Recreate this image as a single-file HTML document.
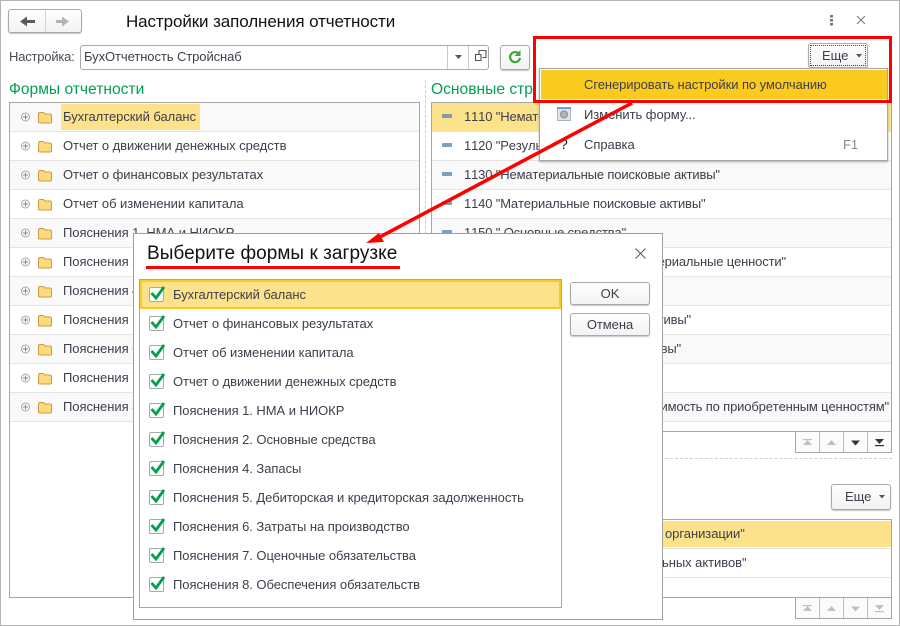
<!DOCTYPE html>
<html lang="ru">
<head>
<meta charset="utf-8">
<title>Настройки заполнения отчетности</title>
<style>
html,body{margin:0;padding:0;background:#fff}
#p{position:relative;width:900px;height:626px;overflow:hidden;background:#fff;font-family:"Liberation Sans",Arial,sans-serif;font-size:13px;color:#3e3e4c}
#p div{position:absolute;box-sizing:border-box}
.t{white-space:nowrap;line-height:16px;letter-spacing:-.05px}
.n{letter-spacing:-.15px;font-kerning:none}
.r{height:29px;border-bottom:1px solid #e4e4e4;left:0;right:0}
.o{background:#f9f9f9}
.btn{border:1px solid #a9a9a9;border-radius:3px;background:linear-gradient(#fefefe,#f3f3f3);box-shadow:0 1px 1px #c4c4c4;text-align:center}
svg{position:absolute;overflow:visible}
</style>
</head>
<body>
<div id="p">
<div style="left:0;top:0;width:900px;height:626px;border:1px solid #b4b4b4"></div>

<!-- top bar -->
<div class="btn" style="left:8px;top:9px;width:74px;height:24px"></div>
<div style="left:45px;top:10px;width:1px;height:22px;background:#d4d4d4"></div>
<svg style="left:0;top:0" width="100" height="40"><path d="M20 21.500l7-5v3.500h8v3h-8v3.500z" fill="#5a5a5a"/><path d="M69 21.500l-7-5v3.500h-6v3h6v3.500z" fill="#b4b4b4"/></svg>
<div class="t" style="left:126px;top:11px;font-size:17px;line-height:22px;color:#111;letter-spacing:-.1px">Настройки заполнения отчетности</div>
<svg style="left:825px;top:12px" width="50" height="18"><g fill="#777"><rect x="5" y="3" width="3" height="2.500"/><rect x="5" y="7" width="3" height="2.500"/><rect x="5" y="11" width="3" height="2.500"/></g><path d="M32 4l8 8M40 4l-8 8" stroke="#777" stroke-width="1" fill="none"/></svg>

<!-- setting field -->
<div class="t" style="left:9px;top:49px;color:#4a4a5c;letter-spacing:-.2px">Настройка:</div>
<div style="left:80px;top:45px;width:409px;height:25px;border:1px solid #a8a8a8;border-radius:3px;background:#fff"></div>
<div style="left:447px;top:46px;width:1px;height:23px;background:#c8c8c8"></div>
<div style="left:468px;top:46px;width:1px;height:23px;background:#c8c8c8"></div>
<div class="t" style="left:84px;top:49px;letter-spacing:-.08px">БухОтчетность Стройснаб</div>
<svg style="left:440px;top:30px" width="60" height="40"><path d="M15 25h7l-3.500 4z" fill="#555"/><path d="M39 24.500v-4h7v7h-3.500M35.500 24.500h5.500v6h-5.500z" fill="none" stroke="#555" stroke-width="1.100"/></svg>
<div class="btn" style="left:500px;top:45px;width:30px;height:25px"></div>
<svg style="left:500px;top:45px" width="30" height="25"><path d="M20 13a5 5 0 1 1-2-5" fill="none" stroke="#3aa935" stroke-width="2.200"/><path d="M20.500 5v6h-6z" fill="#3aa935"/></svg>

<!-- left section -->
<div class="t" style="left:9px;top:80px;font-size:15.600px;line-height:19px;color:#00a252;letter-spacing:0">Формы отчетности</div>
<div style="left:425px;top:80px;height:380px;border-left:1px dashed #cfcfcf"></div>
<div style="left:9px;top:102px;width:411px;height:496px;border:1px solid #a6a6a6;background:#fff"></div>
<div style="left:10px;top:103px;width:409px;height:319px">
<div class="r o" style="top:0"></div><div class="r" style="top:29px"></div><div class="r o" style="top:58px"></div><div class="r" style="top:87px"></div><div class="r o" style="top:116px"></div><div class="r" style="top:145px"></div><div class="r o" style="top:174px"></div><div class="r" style="top:203px"></div><div class="r o" style="top:232px"></div><div class="r" style="top:261px"></div><div class="r o" style="top:290px"></div>
</div>
<div style="left:61px;top:104px;width:139px;height:26px;background:#fde28c"></div>
<svg style="left:0;top:0" width="60" height="430">
<defs><g id="f"><circle cx="25.500" cy="0" r="4" fill="#fafafa" stroke="#a8a8a8"/><path d="M23 0h5M25.500 -2.500v5" stroke="#888" stroke-width="1"/><path d="M38.500 5.500v-9l1-1h4l1.500 1.500h5.500l1 1v7.500l-1 .5h-11z" fill="#fcd97c" stroke="#cf9a45"/></g></defs>
<use href="#f" y="117"/><use href="#f" y="146"/><use href="#f" y="175"/><use href="#f" y="204"/><use href="#f" y="233"/><use href="#f" y="262"/><use href="#f" y="291"/><use href="#f" y="320"/><use href="#f" y="349"/><use href="#f" y="378"/><use href="#f" y="407"/>
</svg>
<div class="t" style="left:63px;top:109px">Бухгалтерский баланс</div>
<div class="t" style="left:63px;top:138px">Отчет о движении денежных средств</div>
<div class="t" style="left:63px;top:167px">Отчет о финансовых результатах</div>
<div class="t" style="left:63px;top:196px">Отчет об изменении капитала</div>
<div class="t" style="left:63px;top:225px">Пояснения 1. НМА и НИОКР</div>
<div class="t" style="left:63px;top:254px">Пояснения 2</div>
<div class="t" style="left:63px;top:283px">Пояснения 4</div>
<div class="t" style="left:63px;top:312px">Пояснения 5</div>
<div class="t" style="left:63px;top:341px">Пояснения 6</div>
<div class="t" style="left:63px;top:370px">Пояснения 7</div>
<div class="t" style="left:63px;top:399px">Пояснения 8</div>

<!-- right section -->
<div class="t" style="left:431px;top:80px;font-size:15.600px;line-height:19px;color:#00a252;letter-spacing:0">Основные стр</div>
<div style="left:431px;top:102px;width:461px;height:330px;border:1px solid #a6a6a6;background:#fff"></div>
<div style="left:432px;top:103px;width:459px;height:319px">
<div class="r" style="top:0;background:#fde28c"></div><div class="r" style="top:29px"></div><div class="r o" style="top:58px"></div><div class="r" style="top:87px"></div><div class="r o" style="top:116px"></div><div class="r" style="top:145px"></div><div class="r o" style="top:174px"></div><div class="r" style="top:203px"></div><div class="r o" style="top:232px"></div><div class="r" style="top:261px"></div><div class="r o" style="top:290px"></div>
</div>
<svg style="left:0;top:0" width="460" height="240"><g fill="#7d9fbd" stroke="#5f7f9e" stroke-width=".6"><rect x="442.500" y="114.500" width="9" height="3"/><rect x="442.500" y="143.500" width="9" height="3"/><rect x="442.500" y="172.500" width="9" height="3"/><rect x="442.500" y="201.500" width="9" height="3"/><rect x="442.500" y="230.500" width="9" height="3"/></g></svg>
<div class="t n" style="left:464px;top:109px">1110 "Немате</div>
<div class="t n" style="left:464px;top:138px">1120 "Резуль</div>
<div class="t n" style="left:464px;top:167px">1130 "Нематериальные поисковые активы"</div>
<div class="t n" style="left:464px;top:196px">1140 "Материальные поисковые активы"</div>
<div class="t n" style="left:464px;top:225px">1150 " Основные средства"</div>
<div class="t n" style="right:114px;top:254px">териальные ценности"</div>
<div class="t n" style="right:209px;top:312px">ктивы"</div>
<div class="t n" style="right:219px;top:341px">ивы"</div>
<div class="t n" style="right:11px;top:399px">оимость по приобретенным ценностям"</div>

<div style="left:795px;top:431px;width:97px;height:22px;border:1px solid #a6a6a6;background:#fbfbfb"></div>
<div style="left:819px;top:432px;width:1px;height:20px;background:#c0c0c0"></div>
<div style="left:843px;top:432px;width:1px;height:20px;background:#c0c0c0"></div>
<div style="left:867px;top:432px;width:1px;height:20px;background:#c0c0c0"></div>
<svg style="left:795px;top:431px" width="97" height="22"><g fill="#c0c0c0"><rect x="8" y="8" width="9" height="1.200"/><path d="M8 14h9l-4.500-5z"/><path d="M32 14h9l-4.500-5z"/></g><g fill="#333"><path d="M56 9.500h9l-4.500 5z"/><path d="M80 8h9l-4.500 5z"/><rect x="80" y="14" width="9" height="1.200"/></g></svg>

<div style="left:431px;top:458px;width:461px;border-top:1px dashed #cfcfcf"></div>

<div class="btn" style="left:831px;top:484px;width:60px;height:26px"></div>
<div class="t" style="left:845px;top:489px">Еще</div>
<svg style="left:879px;top:495px" width="10" height="6"><path d="M0 0h6l-3 3.500z" fill="#555"/></svg>

<div style="left:431px;top:519px;width:461px;height:79px;border:1px solid #a6a6a6;background:#fff"></div>
<div style="left:432px;top:521px;width:459px;height:26px;background:#fde28c"></div>
<div style="left:432px;top:548px;width:459px;height:1px;background:#e4e4e4"></div>
<div style="left:432px;top:577px;width:459px;height:1px;background:#e4e4e4"></div>
<div class="t" style="left:665px;top:526px">организации"</div>
<div class="t" style="left:662px;top:555px">ьных активов"</div>

<div style="left:795px;top:597px;width:97px;height:22px;border:1px solid #a6a6a6;background:#fbfbfb"></div>
<div style="left:819px;top:598px;width:1px;height:20px;background:#c0c0c0"></div>
<div style="left:843px;top:598px;width:1px;height:20px;background:#c0c0c0"></div>
<div style="left:867px;top:598px;width:1px;height:20px;background:#c0c0c0"></div>
<svg style="left:795px;top:597px" width="97" height="22"><g fill="#c0c0c0"><rect x="8" y="8" width="9" height="1.200"/><path d="M8 14h9l-4.500-5z"/><path d="M32 14h9l-4.500-5z"/><path d="M56 9.500h9l-4.500 5z"/><path d="M80 8h9l-4.500 5z"/><rect x="80" y="14" width="9" height="1.200"/></g></svg>

<!-- dialog -->
<div style="left:133px;top:233px;width:530px;height:387px;border:1px solid #a0a0a0;background:#fff"></div>
<div class="t" style="left:147px;top:243px;font-size:19px;line-height:22px;color:#111;letter-spacing:.04px">Выберите формы к загрузке</div>
<div style="left:146px;top:266px;width:254px;height:3px;background:#f00"></div>
<svg style="left:634px;top:247px" width="14" height="14"><path d="M1.500 1.500l10 10M11.500 1.500l-10 10" stroke="#555" stroke-width="1" fill="none"/></svg>
<div style="left:139px;top:279px;width:423px;height:329px;border:1px solid #a6a6a6;background:#fff"></div>
<div style="left:140px;top:280px;width:421px;height:29px;background:#fde28c;border:2px solid #fbca1e"></div>
<svg style="left:0;top:0" width="170" height="600">
<defs><g id="c"><rect x="149.500" y="-7.500" width="14" height="14" rx="1.500" fill="#fff" stroke="#a8a8a8"/><path d="M151.500 -2l4.500 5l8-11" fill="none" stroke="#00a04f" stroke-width="2.800"/></g></defs>
<use href="#c" y="295"/><use href="#c" y="324"/><use href="#c" y="353"/><use href="#c" y="382"/><use href="#c" y="411"/><use href="#c" y="440"/><use href="#c" y="469"/><use href="#c" y="498"/><use href="#c" y="527"/><use href="#c" y="556"/><use href="#c" y="585"/>
</svg>
<div class="t" style="left:173px;top:287px">Бухгалтерский баланс</div>
<div class="t" style="left:173px;top:316px">Отчет о финансовых результатах</div>
<div class="t" style="left:173px;top:345px">Отчет об изменении капитала</div>
<div class="t" style="left:173px;top:374px">Отчет о движении денежных средств</div>
<div class="t" style="left:173px;top:403px">Пояснения 1. НМА и НИОКР</div>
<div class="t" style="left:173px;top:432px">Пояснения 2. Основные средства</div>
<div class="t" style="left:173px;top:461px">Пояснения 4. Запасы</div>
<div class="t" style="left:173px;top:490px">Пояснения 5. Дебиторская и кредиторская задолженность</div>
<div class="t" style="left:173px;top:519px">Пояснения 6. Затраты на производство</div>
<div class="t" style="left:173px;top:548px">Пояснения 7. Оценочные обязательства</div>
<div class="t" style="left:173px;top:577px">Пояснения 8. Обеспечения обязательств</div>
<div class="btn t" style="left:570px;top:282px;width:80px;height:23px;line-height:21px">OK</div>
<div class="btn t" style="left:570px;top:313px;width:80px;height:23px;line-height:21px">Отмена</div>

<!-- popup menu -->
<div style="left:539px;top:68px;width:349px;height:93px;border:1px solid #a6a6a6;background:#fff;box-shadow:0 1px 2px #aaa"></div>
<div style="left:541px;top:70px;width:346px;height:29px;background:#fbca1e"></div>
<div class="t" style="left:584px;top:77px;letter-spacing:-.07px">Сгенерировать настройки по умолчанию</div>
<svg style="left:557px;top:107px" width="14" height="14"><rect x=".5" y=".5" width="13" height="13" fill="#dfe4ea" stroke="#a9b4bf"/><rect x="0" y="0" width="14" height="2" fill="#6f9fd0"/><circle cx="7" cy="7.500" r="3.500" fill="#b5b5b5" stroke="#8a8a8a"/></svg>
<div class="t" style="left:584px;top:107px">Изменить форму...</div>
<div class="t" style="left:560px;top:136px;font-size:14px;color:#111">?</div>
<div class="t" style="left:584px;top:137px">Справка</div>
<div class="t" style="left:843px;top:137px;color:#8a8a8a">F1</div>

<!-- Еще top -->
<div class="btn" style="left:808px;top:43px;width:60px;height:25px"></div>
<div style="left:810px;top:45px;width:56px;height:21px;border:1px dotted #444"></div>
<div class="t" style="left:822px;top:48px">Еще</div>
<svg style="left:856px;top:54px" width="10" height="6"><path d="M0 0h6l-3 3.500z" fill="#555"/></svg>

<!-- annotations -->
<div style="left:533px;top:36px;width:359px;height:67px;border:3px solid #f00"></div>
<svg style="left:0;top:0" width="900" height="626"><path d="M632 103L376 239" stroke="#f00" stroke-width="3.500" fill="none"/><path d="M366 243l13-10l5 9z" fill="#f00"/></svg>
</div>
</body>
</html>
